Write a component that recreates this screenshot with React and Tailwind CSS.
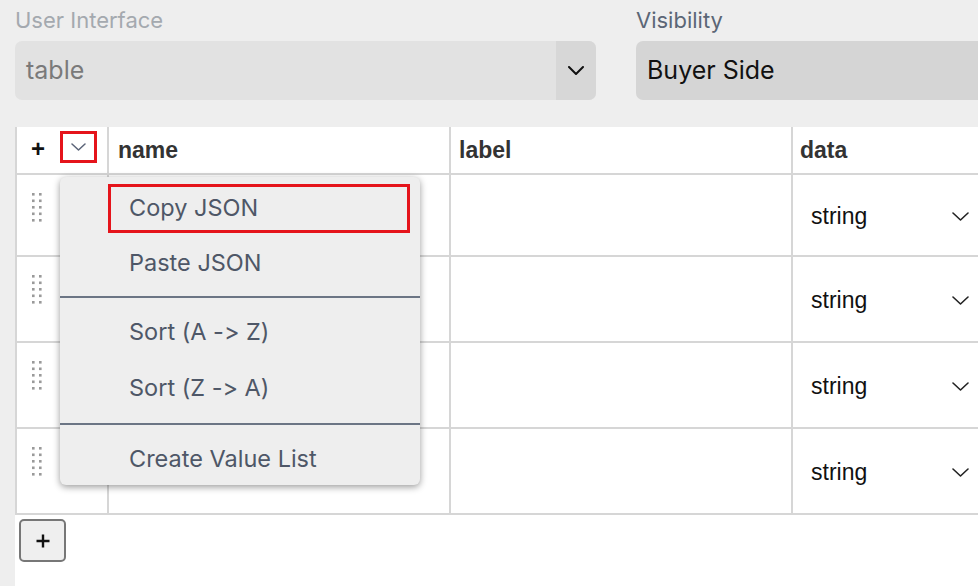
import React from "react";

const Chevron = ({ className = "", color = "#222", w = 17, h = 9, sw = 1.6 }) => (
  <svg width={w} height={h} viewBox={`0 0 ${w} ${h}`} className={className} fill="none">
    <polyline points={`1,1 ${w / 2},${h - 1} ${w - 1},1`} stroke={color} strokeWidth={sw} strokeLinecap="round" strokeLinejoin="round" />
  </svg>
);

const Grip = () => (
  <svg width="10" height="29" viewBox="0 0 10 29" fill="#9a9a9a">
    {[0, 6.5, 13, 19.5, 26].map((y) => (
      <g key={y}>
        <rect x="0" y={y} width="2.6" height="2.6" />
        <rect x="7" y={y} width="2.6" height="2.6" />
      </g>
    ))}
  </svg>
);

const rowHeights = ["h-[82px]", "h-[86px]", "h-[86px]", "h-[86px]"];

export default function App() {
  return (
    <div
      className="relative w-[978px] h-[586px] overflow-hidden bg-[#eeeeee] flex flex-col [font-variant-ligatures:none] [font-feature-settings:'calt'_0]"
      style={{ fontFamily: "Inter, 'Noto Sans', sans-serif" }}
    >
      {/* top fields */}
      <div className="flex gap-[40px] pl-[15px] pt-[8px] shrink-0">
        <div className="w-[581px] shrink-0 flex flex-col">
          <div className="h-[25px] leading-[25px] text-[22px] text-[#a4a9af]">User Interface</div>
          <div className="mt-[8px] h-[59px] rounded-[7px] bg-[#e2e2e2] flex overflow-hidden">
            <div className="flex-1 flex items-center pl-[11px] text-[25px] text-[#7a7a7a]">table</div>
            <div className="w-[40px] bg-[#d7d7d7] flex items-center justify-center">
              <Chevron w={16} h={9} sw={2} color="#111" />
            </div>
          </div>
        </div>
        <div className="w-[581px] shrink-0 flex flex-col">
          <div className="h-[25px] leading-[25px] text-[22px] text-[#5b6676]">Visibility</div>
          <div className="mt-[8px] h-[59px] rounded-[7px] bg-[#d5d5d5] flex items-center pl-[11px] text-[25px] text-[#111]">
            Buyer Side
          </div>
        </div>
      </div>

      {/* table area */}
      <div className="mt-[27px] ml-[15px] flex-1 bg-white flex flex-col" style={{ fontFamily: "'Liberation Sans', Arial, sans-serif" }}>
        <div className="border-l-2 border-[#d6d6d6] grid grid-cols-[92px_342px_342px_300px]">
          {/* header */}
          <div className="h-[48px] border-r-2 border-b-2 border-[#d6d6d6] relative">
            <span className="absolute left-[14px] top-[9px] text-[24px] font-bold text-[#111] leading-[26px]">+</span>
            <div className="absolute left-[43px] top-[4px] w-[37px] h-[32px] border-[3px] border-[#e5141b] flex items-center justify-center">
              <Chevron w={15} h={8} sw={1.5} color="#5b6478" />
            </div>
          </div>
          <div className="h-[48px] border-r-2 border-b-2 border-[#d6d6d6] flex items-center pl-[9px] text-[23px] font-bold text-[#333]">name</div>
          <div className="h-[48px] border-r-2 border-b-2 border-[#d6d6d6] flex items-center pl-[8px] text-[23px] font-bold text-[#333]">label</div>
          <div className="h-[48px] border-b-2 border-[#d6d6d6] flex items-center pl-[7px] text-[23px] font-bold text-[#333]">data</div>

          {rowHeights.map((h, i) => (
            <React.Fragment key={i}>
              <div className={`${h} border-r-2 border-b-2 border-[#d6d6d6] pl-[15px] pt-[18px]`}>
                <Grip />
              </div>
              <div className={`${h} border-r-2 border-b-2 border-[#d6d6d6]`} />
              <div className={`${h} border-r-2 border-b-2 border-[#d6d6d6]`} />
              <div className={`${h} border-b-2 border-[#d6d6d6] flex items-center pl-[18px] pt-[2px] text-[23px] text-[#111]`}>
                <span className="flex-1">string</span>
                <Chevron className="mr-[124px]" w={17} h={9} sw={1.6} color="#222" />
              </div>
            </React.Fragment>
          ))}
        </div>
        <div className="pl-[4px] pt-[4px]">
          <button className="w-[47px] h-[43px] rounded-[5px] border-2 border-[#777] bg-[#efefef] flex items-center justify-center">
            <svg width="14" height="14" viewBox="0 0 14 14">
              <path d="M7 0.5V13.5M0.5 7H13.5" stroke="#111" strokeWidth="2.4" />
            </svg>
          </button>
        </div>
      </div>

      {/* dropdown menu */}
      <div className="absolute left-[60px] top-[177px] w-[360px] h-[308px] rounded-[6px] bg-[#eeeeee] shadow-[0_2px_7px_rgba(0,0,0,0.4)] flex flex-col text-[23.5px] text-[#4e5767]">
        <div className="pt-[7px] pl-[48px] pr-[10px]">
          <div className="h-[49px] border-[3px] border-[#e5141b] flex items-center pl-[18px] pb-[2px]">Copy JSON</div>
        </div>
        <div className="h-[60px] flex items-center pl-[69px]">Paste JSON</div>
        <div className="mt-[3px] h-[2px] bg-[#6b7584]" />
        <div className="mt-[6px] h-[56px] flex items-center pl-[69px]">Sort (A -&gt; Z)</div>
        <div className="h-[56px] flex items-center pl-[69px]">Sort (Z -&gt; A)</div>
        <div className="mt-[7px] h-[2px] bg-[#6b7584]" />
        <div className="h-[60px] flex items-center pl-[69px] pt-[8px]">Create Value List</div>
      </div>
    </div>
  );
}
